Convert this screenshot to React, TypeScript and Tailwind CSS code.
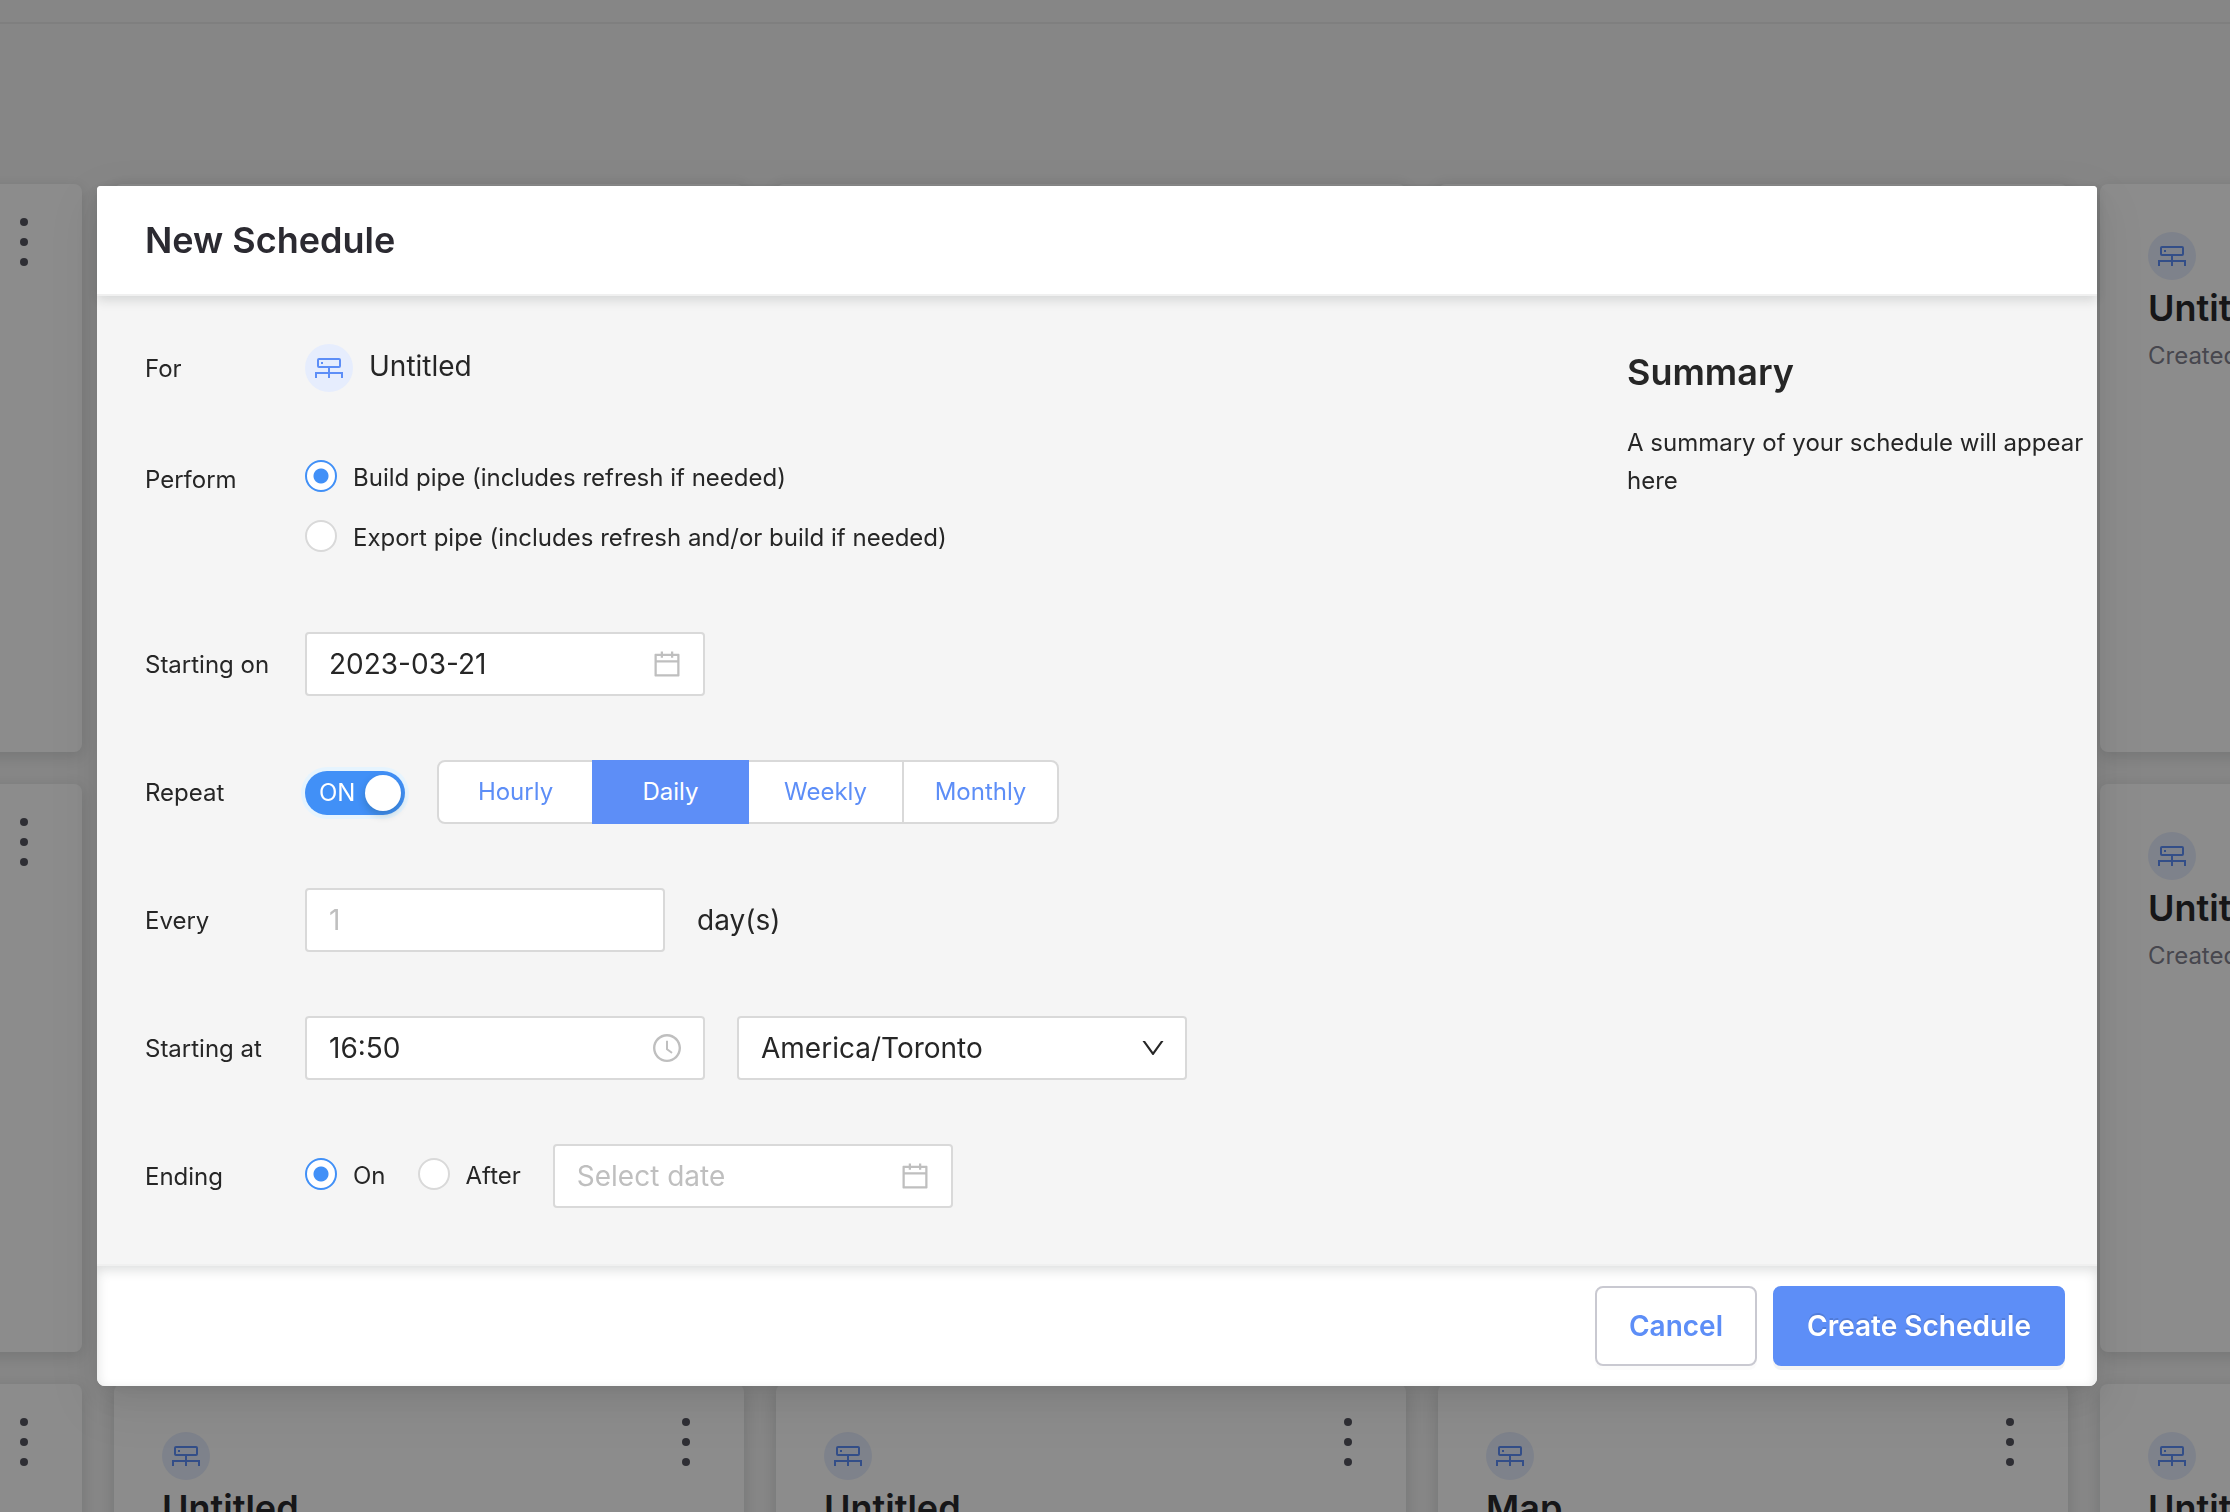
import { useState } from "react";
import type { ReactNode } from "react";
import { AiOutlineCalendar, AiOutlineClockCircle, AiOutlineDown } from "react-icons/ai";

const frequencies = ["Hourly", "Daily", "Weekly", "Monthly"];

// cards without a title are still loading
const cards = [
  { title: "" }, { title: "" }, { title: "" }, { title: "" }, { title: "Untitled", subtitle: "Created" },
  { title: "" }, { title: "" }, { title: "" }, { title: "" }, { title: "Untitled", subtitle: "Created" },
  { title: "" }, { title: "Untitled" }, { title: "Untitled" }, { title: "Map" }, { title: "Untitled" },
];

const fieldClass =
  "h-16 w-full rounded-sm border-2 border-[#d9d9d9] bg-white px-[22px] text-[28px] text-[#262626] placeholder:text-[#bfbfbf] outline-none";

function PipeIcon() {
  return (
    <span className="block size-12 shrink-0 rounded-full bg-[#e6edfd]">
      <svg viewBox="0 0 48 48" className="size-12" fill="none" stroke="#5d8ef7" strokeWidth="2" aria-hidden="true">
        <rect x="13" y="15" width="22" height="8" rx="1" />
        <path d="M24 24v10M11 34v-5h26v5" />
        <rect x="16" y="18" width="2" height="2" fill="#5d8ef7" stroke="none" />
      </svg>
    </span>
  );
}

function PipeCard({ title, subtitle }: { title: string; subtitle?: string }) {
  return (
    <article className="flex h-[568px] items-start justify-between rounded-lg bg-white py-[34px] pr-[50px] pl-12 shadow-[0_4px_16px_rgba(27,31,35,0.15)]">
      <div className="pt-[14px]">
        <PipeIcon />
        {title && <h2 className="mt-1 text-4xl leading-[48px] font-semibold text-[#28292d]">{title}</h2>}
        {subtitle && <p className="mt-1 text-2xl leading-10 text-[#82828f]">{subtitle}</p>}
      </div>
      <button aria-label="More actions" className="flex w-4 flex-col items-center gap-3">
        <span className="size-2 rounded-full bg-[#55555f]" />
        <span className="size-2 rounded-full bg-[#55555f]" />
        <span className="size-2 rounded-full bg-[#55555f]" />
      </button>
    </article>
  );
}

function Radio({ name, label, checked, onChange }: { name: string; label: string; checked: boolean; onChange: () => void }) {
  return (
    <label className="flex h-9 items-start gap-4 leading-9">
      <input
        type="radio"
        name={name}
        checked={checked}
        onChange={onChange}
        className="size-8 shrink-0 appearance-none rounded-full border-2 border-[#d9d9d9] bg-white checked:border-[#4190f7] checked:bg-[radial-gradient(circle,#4190f7_7px,#ffffff_8px)]"
      />
      {label}
    </label>
  );
}

function FormRow({ label, htmlFor, children }: { label: string; htmlFor?: string; children: ReactNode }) {
  return (
    <div className="flex min-h-16 items-center">
      <label htmlFor={htmlFor} className="w-40 shrink-0 pt-0.5">{label}</label>
      <div className="flex items-center gap-8">{children}</div>
    </div>
  );
}

export default function App() {
  const [action, setAction] = useState("build");
  const [repeat, setRepeat] = useState(true);
  const [frequency, setFrequency] = useState("Daily");
  const [ending, setEnding] = useState("on");

  return (
    <div className="relative h-screen overflow-hidden bg-[#f5f5f5] font-['Inter',sans-serif] text-2xl text-[#262626]">
      <header className="h-6 border-b-2 border-[#e8e8e8]" />
      <main className="mt-40 -ml-[548px] grid grid-cols-[repeat(5,630px)] gap-8">
        {cards.map((card, i) => (
          <PipeCard key={i} title={card.title} subtitle={card.subtitle} />
        ))}
      </main>

      {/* Modal */}
      <div className="fixed inset-0 flex items-start justify-center bg-black/45 pt-[186px] pr-9">
        <section
          role="dialog"
          aria-labelledby="modal-title"
          className="w-full max-w-[2000px] rounded-t-sm rounded-b-lg bg-[#f5f5f5] shadow-[0_6px_12px_-8px_rgba(0,0,0,0.12),0_12px_32px_rgba(0,0,0,0.08),0_18px_56px_16px_rgba(0,0,0,0.05)]"
        >
          <div className="relative flex h-[110px] items-center rounded-t-sm border-b-2 border-[#f0f0f0] bg-white px-12 shadow-[0_4px_12px_rgba(27,31,35,0.15)]">
            <h1 id="modal-title" className="text-4xl font-semibold text-[#2b2a31]">New Schedule</h1>
          </div>

          <div className="flex justify-between pt-12 pb-14 pl-12">
            <form>
              <div className="mb-[68px] flex items-center">
                <span className="w-40 shrink-0 pt-0.5">For</span>
                <PipeIcon />
                <span className="pb-0.5 pl-4 text-[28px]">Untitled</span>
              </div>

              <div className="mb-[76px] flex">
                <span id="perform-label" className="w-40 shrink-0 pt-0.5 leading-9">Perform</span>
                <div role="radiogroup" aria-labelledby="perform-label" className="flex flex-col gap-6">
                  <Radio name="action" label="Build pipe (includes refresh if needed)" checked={action === "build"} onChange={() => setAction("build")} />
                  <Radio name="action" label="Export pipe (includes refresh and/or build if needed)" checked={action === "export"} onChange={() => setAction("export")} />
                </div>
              </div>

              <div className="flex flex-col gap-16">
                <FormRow label="Starting on" htmlFor="start-date">
                  <div className="relative w-[400px]">
                    <input id="start-date" defaultValue="2023-03-21" className={fieldClass} />
                    <AiOutlineCalendar className="pointer-events-none absolute top-4 right-[22px] size-8 text-[#bfbfbf]" />
                  </div>
                </FormRow>

                <FormRow label="Repeat" htmlFor="repeat">
                  <button
                    id="repeat"
                    type="button"
                    role="switch"
                    aria-checked={repeat}
                    onClick={() => setRepeat(!repeat)}
                    className="mt-0.5 flex h-11 w-[100px] items-center justify-between rounded-full bg-[#4190f7] pr-1 pl-[14px] text-white shadow-[0_0_0_4px_#e6f4fe]"
                  >
                    ON
                    <span className="size-9 rounded-full bg-white shadow-[0_4px_8px_rgba(0,35,11,0.2)]" />
                  </button>
                  <div className="flex">
                    {frequencies.map((item) => (
                      <button
                        key={item}
                        type="button"
                        aria-pressed={frequency === item}
                        onClick={() => setFrequency(item)}
                        className={`-ml-0.5 h-16 w-[157px] border-2 first:ml-0 first:rounded-l-lg last:rounded-r-lg ${
                          frequency === item
                            ? "z-10 border-[#5d8ef7] bg-[#5d8ef7] text-white"
                            : "border-[#d9d9d9] bg-white text-[#5d8ef7]"
                        }`}
                      >
                        {item}
                      </button>
                    ))}
                  </div>
                </FormRow>

                <FormRow label="Every" htmlFor="every">
                  <div className="w-[360px]">
                    <input id="every" placeholder="1" className={fieldClass} />
                  </div>
                  <span className="pt-0.5 text-[28px]">day(s)</span>
                </FormRow>

                <FormRow label="Starting at" htmlFor="start-time">
                  <div className="relative w-[400px]">
                    <input id="start-time" defaultValue="16:50" className={fieldClass} />
                    <AiOutlineClockCircle className="pointer-events-none absolute top-4 right-[22px] size-8 text-[#bfbfbf]" />
                  </div>
                  <div className="relative w-[450px]">
                    <select aria-label="Time zone" className={`${fieldClass} appearance-none pt-0.5 [font-kerning:normal] [text-rendering:optimizeLegibility]`}>
                      <option>America/Toronto</option>
                    </select>
                    <AiOutlineDown className="pointer-events-none absolute top-[18px] right-5 size-7" />
                  </div>
                </FormRow>

                <FormRow label="Ending">
                  <Radio name="ending" label="On" checked={ending === "on"} onChange={() => setEnding("on")} />
                  <Radio name="ending" label="After" checked={ending === "after"} onChange={() => setEnding("after")} />
                  <div className="relative w-[400px]">
                    <input aria-label="End date" placeholder="Select date" className={fieldClass} />
                    <AiOutlineCalendar className="pointer-events-none absolute top-4 right-[22px] size-8 text-[#bfbfbf]" />
                  </div>
                </FormRow>
              </div>
            </form>

            <aside className="w-[470px] shrink-0 pt-1">
              <h2 className="text-4xl leading-[48px] font-semibold">Summary</h2>
              <p className="mt-7 leading-[38px]">A summary of your schedule will appear here</p>
            </aside>
          </div>

          <div className="flex justify-end gap-4 rounded-b-lg border-t-2 border-[#f0f0f0] bg-white px-8 py-5 text-[28px] font-semibold shadow-[inset_0_4px_12px_rgba(27,31,35,0.15)]">
            <button className="h-20 rounded-lg border-2 border-[#c9c9d1] bg-white px-8 pt-0.5 text-[#5d8ef7] shadow-[0_4px_0_rgba(0,0,0,0.015)]">Cancel</button>
            <button className="h-20 rounded-lg border-2 border-[#5d8ef7] bg-[#5d8ef7] px-8 pt-0.5 text-white shadow-[0_4px_0_rgba(0,0,0,0.045)] [text-shadow:0_-2px_0_rgba(0,0,0,0.12)]">Create Schedule</button>
          </div>
        </section>
      </div>
    </div>
  );
}
